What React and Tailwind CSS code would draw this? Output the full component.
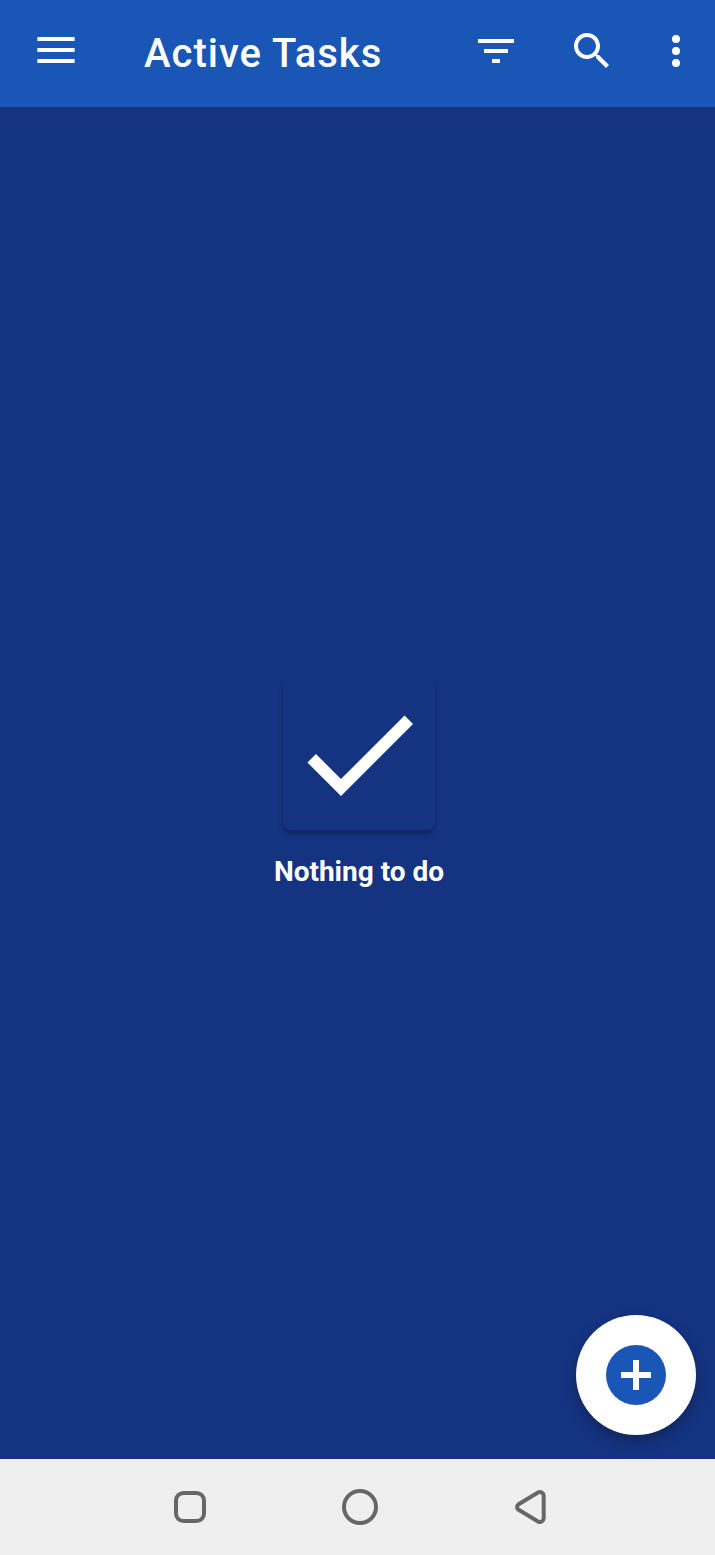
function AppBar() {
  return (
    <header className="flex h-[107px] shrink-0 items-center bg-[#1a56b6] pr-[15px] pb-[5px] pl-8">
      <button type="button" aria-label="Open menu" className="shrink-0">
        <svg className="size-12" viewBox="0 0 48 48" fill="currentColor">
          <path d="M5.4 10h37.2v4H5.4zM5.4 21h37.2v4H5.4zM5.4 32h37.2v4H5.4z" />
        </svg>
      </button>
      <h1 className="ml-16 grow pt-1.5 text-[40px] leading-12 font-medium tracking-wide whitespace-nowrap">
        Active Tasks
      </h1>
      <div className="flex shrink-0 items-center">
        <button type="button" aria-label="Sort and filter">
          <svg className="size-12" viewBox="0 0 24 24" fill="currentColor">
            <path d="M10 18h4v-2h-4v2zM3 6v2h18V6H3zm3 7h12v-2H6v2z" />
          </svg>
        </button>
        <button type="button" aria-label="Search" className="ml-12">
          <svg className="size-12" viewBox="0 0 24 24" fill="currentColor">
            <path d="M15.5 14h-.79l-.28-.27C15.41 12.59 16 11.11 16 9.5 16 5.91 13.09 3 9.5 3S3 5.91 3 9.5 5.91 16 9.5 16c1.61 0 3.09-.59 4.23-1.57l.27.28v.79l5 4.99L20.49 19l-4.99-5zm-6 0C7.01 14 5 11.99 5 9.5S7.01 5 9.5 5 14 7.01 14 9.5 11.99 14 9.5 14z" />
          </svg>
        </button>
        <button type="button" aria-label="More options" className="ml-9">
          <svg className="size-12" viewBox="0 0 24 24" fill="currentColor">
            <circle cx="12" cy="6" r="2" />
            <circle cx="12" cy="12" r="2" />
            <circle cx="12" cy="18" r="2" />
          </svg>
        </button>
      </div>
    </header>
  );
}

function EmptyState() {
  return (
    <div className="flex flex-col items-center gap-[26px]">
      <div className="flex size-[152px] items-center justify-center rounded-lg bg-[#143381] shadow-[0_4px_4px_rgba(17,30,75,0.55)]">
        <svg className="size-36" viewBox="0 0 24 24" fill="currentColor" aria-hidden="true">
          <path d="M9 16.17 4.83 12l-1.42 1.41L9 19 21 7l-1.41-1.41z" />
        </svg>
      </div>
      <p className="text-[28px] leading-8 font-bold">Nothing to do</p>
    </div>
  );
}

function SystemNav() {
  return (
    <nav
      aria-label="System"
      className="flex h-24 shrink-0 items-center justify-center gap-[122px] bg-[#efefef] pl-[5px] text-[#676767]"
    >
      <button type="button" aria-label="Recent apps">
        <svg className="size-12" viewBox="0 0 48 48" fill="none" stroke="currentColor" strokeWidth="4">
          <rect x="10" y="10" width="28" height="28" rx="7.5" />
        </svg>
      </button>
      <button type="button" aria-label="Home">
        <svg className="size-12" viewBox="0 0 48 48" fill="none" stroke="currentColor" strokeWidth="4">
          <circle cx="24" cy="24" r="16" />
        </svg>
      </button>
      <button type="button" aria-label="Back">
        <svg className="size-12" viewBox="0 0 48 48" fill="none" stroke="currentColor" strokeWidth="4">
          <path d="M12.6 21.2 32 9.5A3.8 3.8 0 0 1 37.7 12.7V35.3A3.8 3.8 0 0 1 32 38.5L12.6 26.8A3.3 3.3 0 0 1 12.6 21.2Z" />
        </svg>
      </button>
    </nav>
  );
}

export default function App() {
  return (
    <div className="flex min-h-screen flex-col bg-[#143381] font-['Roboto',sans-serif] text-white">
      <AppBar />
      <main className="relative flex grow items-center justify-center pl-[3px]">
        <EmptyState />
        <button
          type="button"
          aria-label="Add task"
          className="absolute right-[19px] bottom-6 flex size-[120px] items-center justify-center rounded-full bg-white shadow-[0_6px_12px_rgba(16,28,60,0.55)]"
        >
          <svg className="size-[60px]" viewBox="0 0 60 60" aria-hidden="true">
            <circle cx="30" cy="30" r="30" fill="#1a56b6" />
            <path d="M27 15h6v12h12v6H33v12h-6V33H15v-6h12z" fill="#fff" />
          </svg>
        </button>
      </main>
      <SystemNav />
    </div>
  );
}
